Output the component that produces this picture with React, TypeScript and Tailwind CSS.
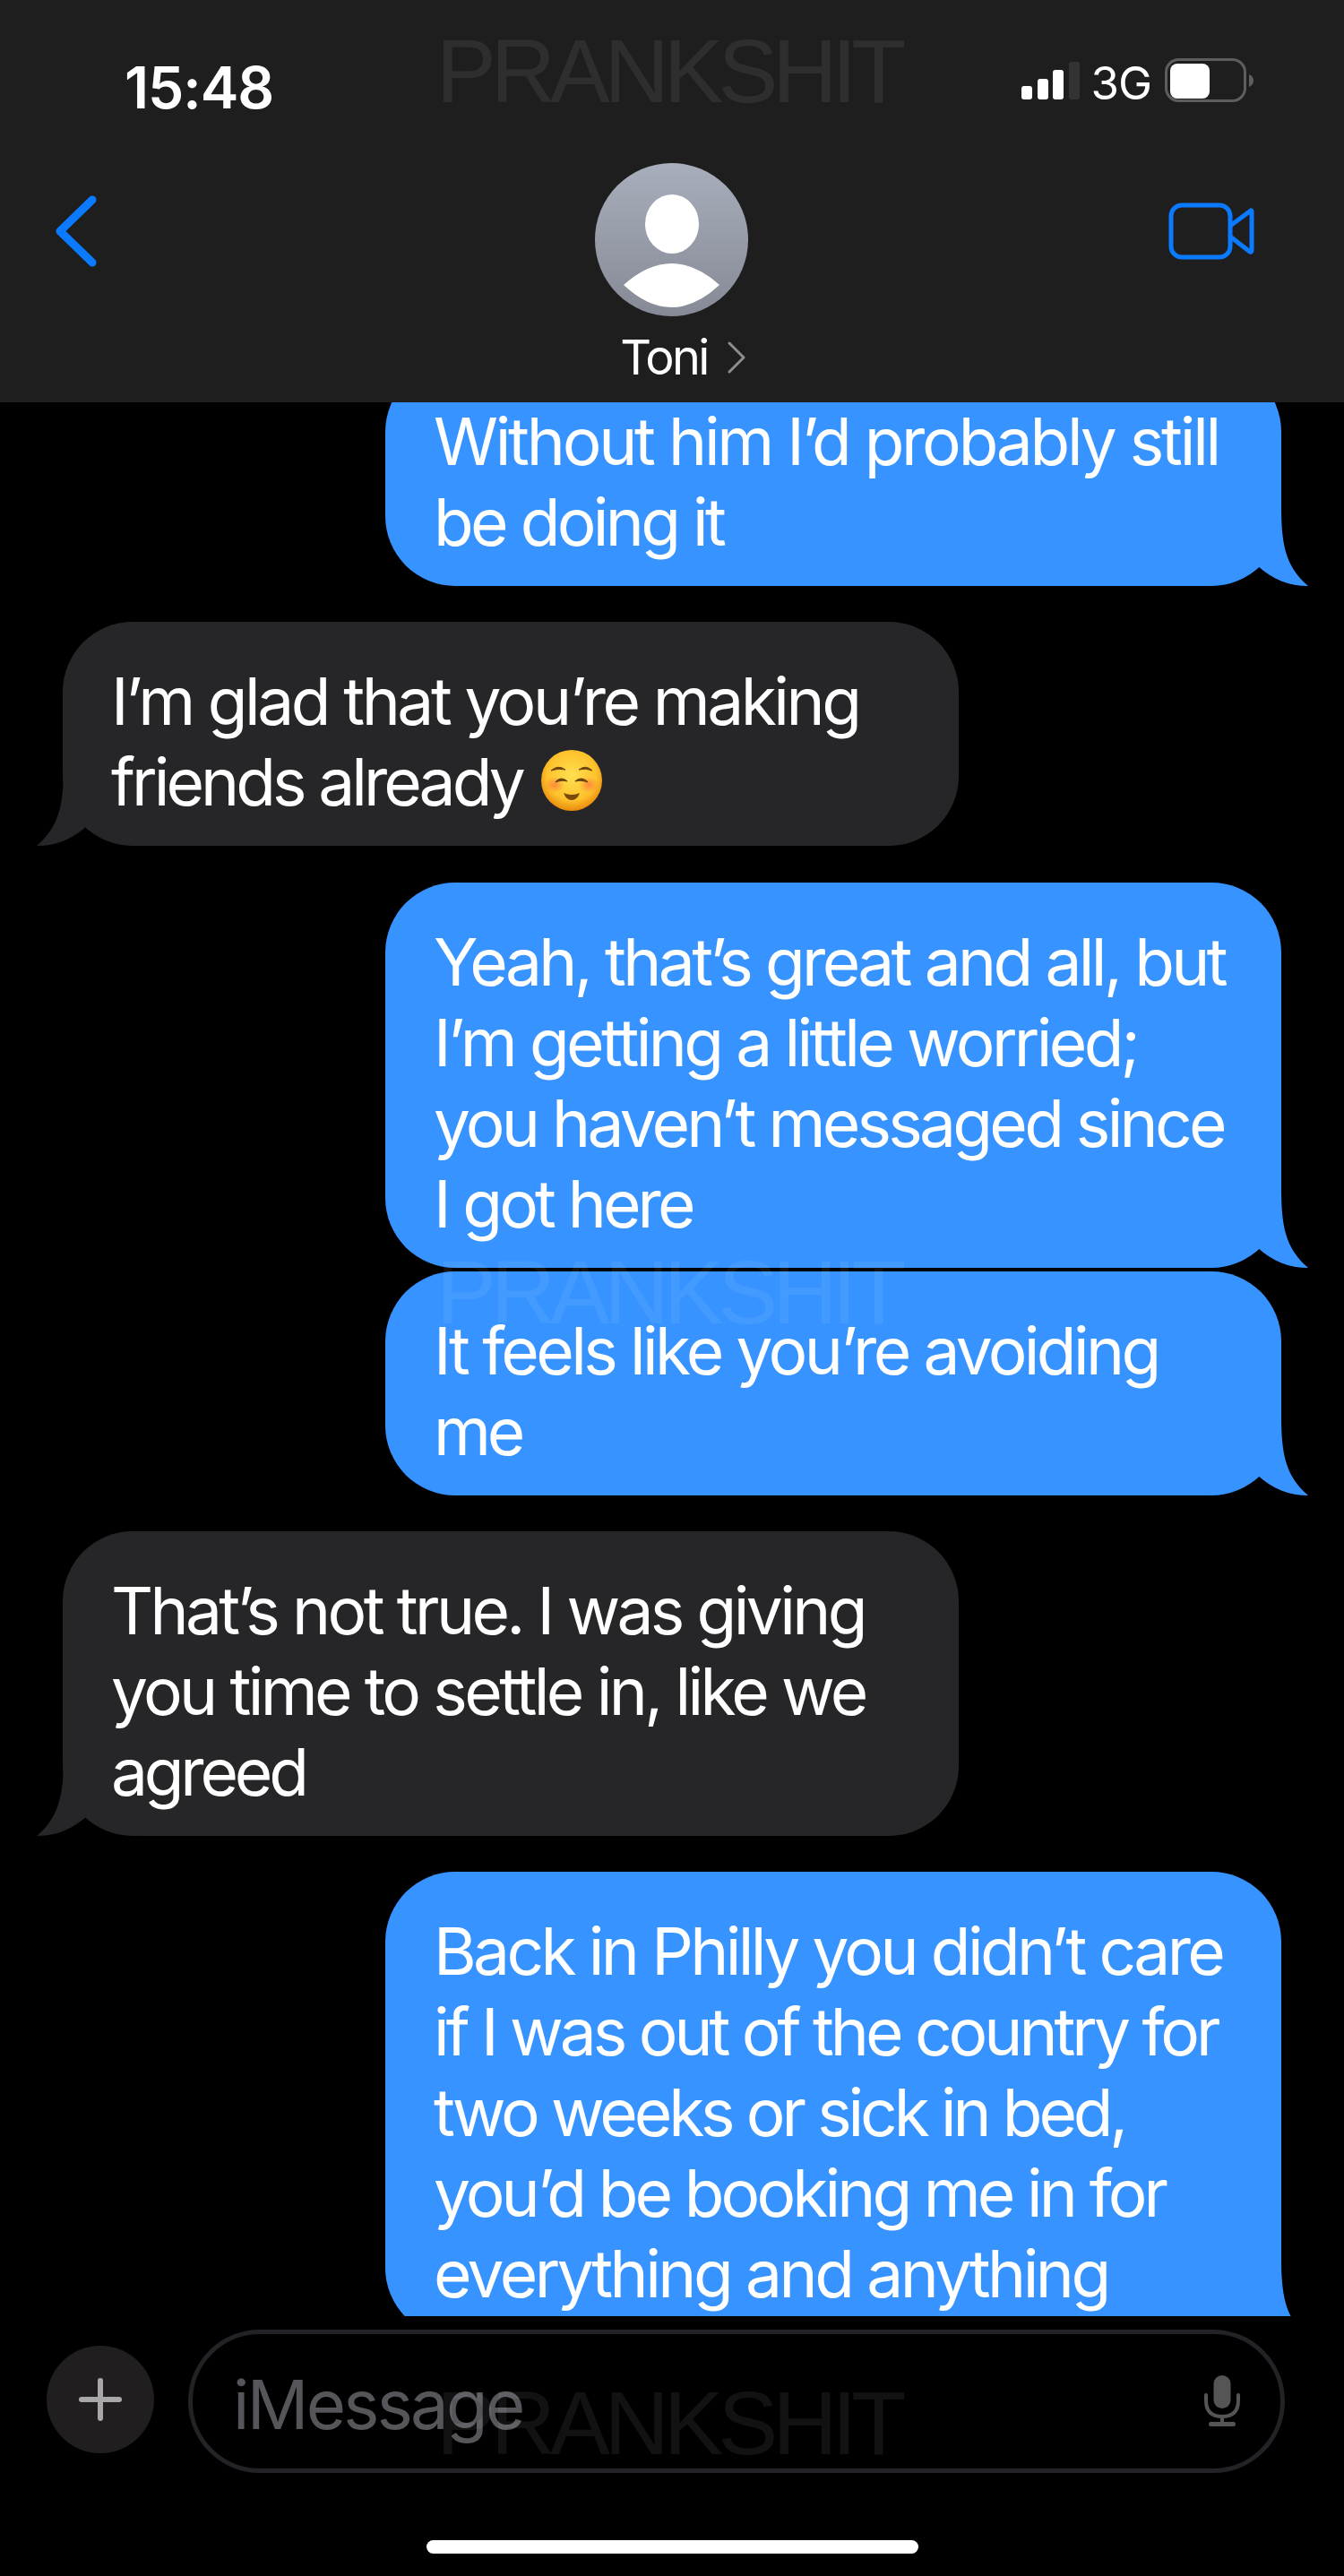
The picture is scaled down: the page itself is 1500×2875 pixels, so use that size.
const FONT = "font-['Inter','Noto_Sans',sans-serif]";

type Line = { text: string; fit?: string };

function Tail({ side, color }: { side: "left" | "right"; color: string }) {
  return (
    <svg
      width="125"
      height="90"
      viewBox="0 0 125 90"
      className={side === "right" ? "absolute bottom-0 right-[-30px]" : "absolute bottom-0 left-[-29px] -scale-x-100"}
    >
      <path d="M95 0 C95 42 99 68 125 90 C104 90 85 83 68 67 C54 81 35 90 5 90 L5 0 Z" fill={color} />
    </svg>
  );
}

function Smile() {
  return (
    <svg width="68" height="68" viewBox="0 0 68 68" className="absolute left-[534px] top-[143px]">
      <defs>
        <radialGradient id="face" cx="50%" cy="42%" r="58%">
          <stop offset="0%" stopColor="#ffdf50" />
          <stop offset="70%" stopColor="#fdc22c" />
          <stop offset="100%" stopColor="#e98a0c" />
        </radialGradient>
        <radialGradient id="blush" cx="50%" cy="50%" r="50%">
          <stop offset="0%" stopColor="#ff7a3d" stopOpacity="0.8" />
          <stop offset="100%" stopColor="#ff7a3d" stopOpacity="0" />
        </radialGradient>
      </defs>
      <circle cx="34" cy="34" r="34" fill="url(#face)" />
      <ellipse cx="15" cy="39" rx="11" ry="9" fill="url(#blush)" />
      <ellipse cx="53" cy="39" rx="11" ry="9" fill="url(#blush)" />
      <path d="M11 23 Q19 16 27 22 Q19 20 11 23 Z M42 22 Q50 16 57 23 Q50 20 42 22 Z" fill="#6b4410" stroke="#6b4410" strokeWidth="1" />
      <path d="M16 36 Q22 29 29 35 Q22 33 16 36 Z M38 35 Q45 29 52 36 Q45 33 38 35 Z" fill="#6b4410" stroke="#6b4410" strokeWidth="1.2" />
      <path d="M25 48 Q34 52 43 48 Q40 56 34 56 Q28 56 25 48 Z" fill="#7a4a0c" />
    </svg>
  );
}

function Bubble({
  me,
  lines,
  className = "",
  children,
}: {
  me?: boolean;
  lines: Line[];
  className?: string;
  children?: React.ReactNode;
}) {
  const color = me ? "#3693ff" : "#262629";
  return (
    <div
      className={`relative w-[1000px] rounded-[78px] pl-[54px] pt-[44px] pb-[26px] text-[73px] leading-[90px] tracking-[-3.7px] font-[430] text-white whitespace-nowrap ${
        me ? "ml-[430px] bg-[#3693ff]" : "ml-[70px] bg-[#262629]"
      } ${className}`}
    >
      <Tail side={me ? "right" : "left"} color={color} />
      {lines.map((l, i) => (
        <div key={i} className={`relative ${l.fit ?? ""}`}>
          {l.text}
        </div>
      ))}
      {children}
    </div>
  );
}

function Watermark({ className }: { className: string }) {
  return (
    <div
      className={`absolute left-[487px] font-['Liberation_Sans',sans-serif] text-[100px] leading-[100px] tracking-[-6px] text-white/[0.07] pointer-events-none ${className}`}
    >
      PRANKSHIT
    </div>
  );
}

export default function App() {
  return (
    <div className={`relative w-[1500px] h-[2875px] bg-black overflow-hidden ${FONT}`}>
      <header className="relative h-[449px] bg-[#1e1e1e]">
        <div className="flex h-[134px] items-start justify-between pl-[139px] pr-[100px]">
          <div className="mt-[61px] text-[64px] leading-[74px] font-semibold tracking-[-1px] text-white">15:48</div>
          <div className="mt-[65px] flex items-start">
            <svg width="66" height="44" viewBox="0 0 66 44" className="mt-[4px] mr-[11px]">
              <rect x="0" y="27" width="12" height="15" rx="3" fill="#fff" />
              <rect x="18" y="19" width="12" height="23" rx="3" fill="#fff" />
              <rect x="35" y="9" width="12" height="33" rx="3" fill="#fff" />
              <rect x="53" y="0" width="12" height="42" rx="3" fill="#333" />
            </svg>
            <div className="mr-[15px] text-[51px] leading-[56px] tracking-[-1px] text-white">3G</div>
            <svg width="100" height="50" viewBox="0 0 100 50">
              <rect x="1.5" y="1.5" width="88" height="46" rx="14" fill="none" stroke="#5e5e5e" strokeWidth="3" />
              <rect x="6" y="6" width="44" height="39" rx="8" fill="#fff" />
              <path d="M94 18 Q99 20 99 25 Q99 30 94 32 Z" fill="#5e5e5e" />
            </svg>
          </div>
        </div>
        <div className="flex items-start justify-between pl-[60px] pr-[100px]">
          <svg width="50" height="80" viewBox="0 0 50 80" className="mt-[84px]">
            <path d="M43 5 L7 40 L43 75" fill="none" stroke="#0a7aff" strokeWidth="9" strokeLinecap="round" strokeLinejoin="round" />
          </svg>
          <svg width="96" height="64" viewBox="0 0 96 64" className="mt-[92px]">
            <rect x="3" y="3" width="66" height="58" rx="12" fill="none" stroke="#0a7aff" strokeWidth="5" />
            <path d="M69 26 L92 9 Q93 8 93 11 L93 53 Q93 56 91 55 L69 38" fill="none" stroke="#0a7aff" strokeWidth="5" strokeLinejoin="round" />
          </svg>
        </div>
        <div className="absolute left-[664px] top-[182px] flex flex-col items-center">
          <div className="relative size-[171px] rounded-full bg-gradient-to-b from-[#a9aebc] to-[#868a96] overflow-hidden">
            <svg width="171" height="171" viewBox="0 0 171 171" className="absolute inset-0">
              <ellipse cx="86" cy="68" rx="30" ry="33" fill="#fff" />
              <path d="M32 136 Q85.5 88 139 136 Q85.5 186 32 136 Z" fill="#fff" />
            </svg>
          </div>
          <div className="mt-[15px] ml-[25px] flex items-center text-[54px] leading-[62px] tracking-[-2.6px] text-white">
            Toni
            <svg width="20" height="36" viewBox="0 0 20 36" className="ml-[22px]">
              <path d="M2 2 L18 18 L2 34" fill="none" stroke="#8e8e8e" strokeWidth="3" strokeLinecap="round" strokeLinejoin="round" />
            </svg>
          </div>
        </div>
      </header>

      <main className="h-[2136px] overflow-hidden flex flex-col">
        <Bubble
          me
          lines={[{ text: "Without him I’d probably still", fit: "tracking-[-3.25px]" }, { text: "be doing it" }]}
          className="mt-[-45px]"
        />
        <Bubble
          lines={[
            { text: "I’m glad that you’re making", fit: "tracking-[-3.45px]" },
            { text: "friends already", fit: "tracking-[-3.95px]" },
          ]}
          className="mt-[40px]"
        >
          <Smile />
        </Bubble>
        <Bubble
          me
          lines={[
            { text: "Yeah, that’s great and all, but", fit: "tracking-[-3.65px]" },
            { text: "I’m getting a little worried;", fit: "tracking-[-3.65px]" },
            { text: "you haven’t messaged since", fit: "tracking-[-3.75px]" },
            { text: "I got here", fit: "tracking-[-3.9px]" },
          ]}
          className="mt-[41px]"
        />
        <Bubble
          me
          lines={[{ text: "It feels like you’re avoiding", fit: "tracking-[-3.65px]" }, { text: "me", fit: "tracking-[-4.2px]" }]}
          className="mt-[4px]"
        />
        <Bubble
          lines={[
            { text: "That’s not true. I was giving", fit: "tracking-[-3.65px]" },
            { text: "you time to settle in, like we", fit: "tracking-[-3.65px]" },
            { text: "agreed", fit: "tracking-[-4.2px]" },
          ]}
          className="mt-[40px]"
        />
        <Bubble
          me
          lines={[
            { text: "Back in Philly you didn’t care", fit: "tracking-[-3.65px]" },
            { text: "if I was out of the country for", fit: "tracking-[-4.05px]" },
            { text: "two weeks or sick in bed,", fit: "tracking-[-4.15px]" },
            { text: "you’d be booking me in for", fit: "tracking-[-3.92px]" },
            { text: "everything and anything", fit: "tracking-[-3.55px]" },
          ]}
          className="mt-[40px] shrink-0"
        />
      </main>

      <footer className="flex items-start pt-[15px] pl-[52px]">
        <div className="mt-[18px] flex size-[120px] items-center justify-center rounded-full bg-[#201e1f]">
          <svg width="48" height="48" viewBox="0 0 48 48">
            <path d="M24 3 V45" stroke="#a8a8a8" strokeWidth="6" strokeLinecap="round" />
            <path d="M3 24 H45" stroke="#a8a8a8" strokeWidth="6" strokeLinecap="round" />
          </svg>
        </div>
        <div className="ml-[38px] flex h-[160px] w-[1224px] items-center justify-between rounded-full border-[5px] border-[#222326] pl-[45px] pr-[44px]">
          <span className="mt-[6px] text-[76px] leading-[80px] tracking-[-2.7px] text-[#55555a]">iMessage</span>
          <svg width="42" height="58" viewBox="0 0 42 58">
            <rect x="11.5" y="0" width="19" height="37" rx="9.5" fill="#555" />
            <path d="M3 22 V28 Q3 46 21 46 Q39 46 39 28 V22" fill="none" stroke="#555" strokeWidth="4" strokeLinecap="round" />
            <path d="M21 46 V54" stroke="#555" strokeWidth="4" />
            <rect x="6" y="52" width="30" height="5" rx="2.5" fill="#555" />
          </svg>
        </div>
      </footer>

      <div className="mx-auto mt-[75px] h-[15px] w-[549px] rounded-full bg-white" />

      <Watermark className="top-[29px]" />
      <Watermark className="top-[1392px]" />
      <Watermark className="top-[2654px]" />
    </div>
  );
}
